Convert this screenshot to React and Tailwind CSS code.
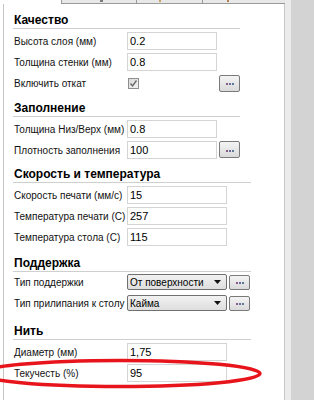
import React from "react";

const FONT = { fontFamily: '"Liberation Sans", Arial, sans-serif' };

function Input({ value, w }) {
  return (
    <div className={`h-[18px] border border-[#d4d4d4] bg-white pl-[2px] flex items-center text-[11px] text-black ${w}`}>
      {value}
    </div>
  );
}

function Dots({ h }) {
  return (
    <div className={`w-[21px] ${h} border border-[#7a7a7a] rounded-[2px] bg-linear-to-b from-[#f4f4f4] to-[#dadada] flex items-center justify-center gap-[1px] pt-[2px]`}>
      <span className="w-[2px] h-[2px] bg-[#8a5a86]" />
      <span className="w-[2px] h-[2px] bg-[#6a6aa0]" />
      <span className="w-[2px] h-[2px] bg-[#5a7a96]" />
    </div>
  );
}

function Select({ value }) {
  return (
    <div className="w-[100px] h-[16px] border border-[#707070] rounded-[2px] bg-linear-to-b from-[#f2f2f2] to-[#dedede] flex items-center pl-[2px] pr-[5px] text-[10px] text-black">
      <span className="flex-1 whitespace-nowrap">{value}</span>
      <svg width="7" height="4" viewBox="0 0 7 4">
        <path d="M0 0H7L3.5 4Z" fill="#111" />
      </svg>
    </div>
  );
}

function Header({ title, w, mt }) {
  return (
    <div className={`${mt} h-[16px] ${w} -ml-[1px] pl-[1px] border-b border-[#cfcfcf] text-[12px] leading-[15px] font-bold text-black`}>
      {title}
    </div>
  );
}

function Row({ label, children, h = "h-[18px]" }) {
  return (
    <div className={`flex items-center ${h}`}>
      <div className="w-[113px] text-[10px] text-[#111] whitespace-nowrap">{label}</div>
      {children}
    </div>
  );
}

function Checkbox() {
  return (
    <svg width="11" height="11" viewBox="0 0 11 11" className="ml-[1px]">
      <defs>
        <linearGradient id="cb" x1="0" y1="0" x2="1" y2="1">
          <stop offset="0" stopColor="#d8d8d8" />
          <stop offset="1" stopColor="#f4f4f4" />
        </linearGradient>
      </defs>
      <rect x="0.5" y="0.5" width="10" height="10" fill="url(#cb)" stroke="#8e8e8e" />
      <path d="M2.5 5.5L4.5 7.8L8.5 2.5" fill="none" stroke="#6a6a6a" strokeWidth="1.4" />
    </svg>
  );
}

export default function App() {
  return (
    <div className="relative w-[314px] h-[400px] flex bg-white overflow-hidden" style={FONT}>
      <div className="w-[285px] flex flex-col">
        <div className="h-[4px] flex shrink-0">
          <div className="w-[61px]" />
          <div className="w-[75px] bg-[#e8e8e8] border-l border-b border-[#9a9a9a] relative">
            <span className="absolute left-[38px] top-0 w-[3px] h-[2px] bg-[#7a7a7a]" />
          </div>
          <div className="w-[66px] bg-[#e8e8e8] border-l border-b border-[#9a9a9a] relative">
            <span className="absolute left-[22px] top-0 w-[2px] h-[2px] bg-[#c8a060]" />
          </div>
          <div className="flex-1 bg-[#e8e8e8] border-l border-b border-[#9a9a9a] relative">
            <span className="absolute left-[24px] top-0 w-[2px] h-[2px] bg-[#b08050]" />
          </div>
        </div>
        <div className="flex-1 ml-[3px] border-l border-r border-[#c6c6c6] pl-[10px] flex flex-col">
          {/* Качество */}
          <Header title="Качество" w="w-[227px]" mt="mt-[9px]" />
          <div className="mt-[3px] flex flex-col gap-[3px]">
            <Row label="Высота слоя (мм)">
              <Input value="0.2" w="w-[90px]" />
            </Row>
            <Row label="Толщина стенки (мм)">
              <Input value="0.8" w="w-[90px]" />
            </Row>
            <Row label="Включить откат">
              <div className="w-[92px]">
                <Checkbox />
              </div>
              <Dots h="h-[17px]" />
            </Row>
          </div>

          {/* Заполнение */}
          <Header title="Заполнение" w="w-[227px]" mt="mt-[9px]" />
          <div className="mt-[3px] flex flex-col gap-[3px]">
            <Row label="Толщина Низ/Верх (мм)">
              <Input value="0.8" w="w-[90px]" />
            </Row>
            <Row label="Плотность заполнения">
              <Input value="100" w="w-[90px]" />
              <div className="ml-[2px] self-start">
                <Dots h="h-[17px]" />
              </div>
            </Row>
          </div>

          {/* Скорость и температура */}
          <Header title="Скорость и температура" w="w-[238px]" mt="mt-[8px]" />
          <div className="mt-[3px] flex flex-col gap-[3px]">
            <Row label="Скорость печати (мм/с)">
              <Input value="15" w="w-[100px]" />
            </Row>
            <Row label="Температура печати (C)">
              <Input value="257" w="w-[100px]" />
            </Row>
            <Row label="Температура стола (C)">
              <Input value="115" w="w-[100px]" />
            </Row>
          </div>

          {/* Поддержка */}
          <Header title="Поддержка" w="w-[238px]" mt="mt-[10px]" />
          <div className="mt-[2px] flex flex-col gap-[5px]">
            <Row label="Тип поддержки" h="h-[16px]">
              <Select value="От поверхности" />
              <div className="ml-[2px]">
                <Dots h="h-[15px]" />
              </div>
            </Row>
            <Row label="Тип прилипания к столу" h="h-[16px]">
              <Select value="Кайма" />
              <div className="ml-[2px]">
                <Dots h="h-[15px]" />
              </div>
            </Row>
          </div>

          {/* Нить */}
          <Header title="Нить" w="w-[238px]" mt="mt-[13px]" />
          <div className="mt-[3px] flex flex-col gap-[3px]">
            <Row label="Диаметр (мм)">
              <Input value="1,75" w="w-[100px]" />
            </Row>
            <Row label="Текучесть (%)">
              <Input value="95" w="w-[100px]" />
            </Row>
          </div>
        </div>
      </div>
      <div className="w-[6px] bg-[#ebebeb]" />
      <div className="flex-1 bg-[#d3d3d3]" />

      <svg className="absolute left-0 top-0 pointer-events-none" width="314" height="400" viewBox="0 0 314 400">
        <ellipse cx="120" cy="373.5" rx="140" ry="13" fill="none" stroke="#e8141c" strokeWidth="3.5" />
      </svg>
    </div>
  );
}
